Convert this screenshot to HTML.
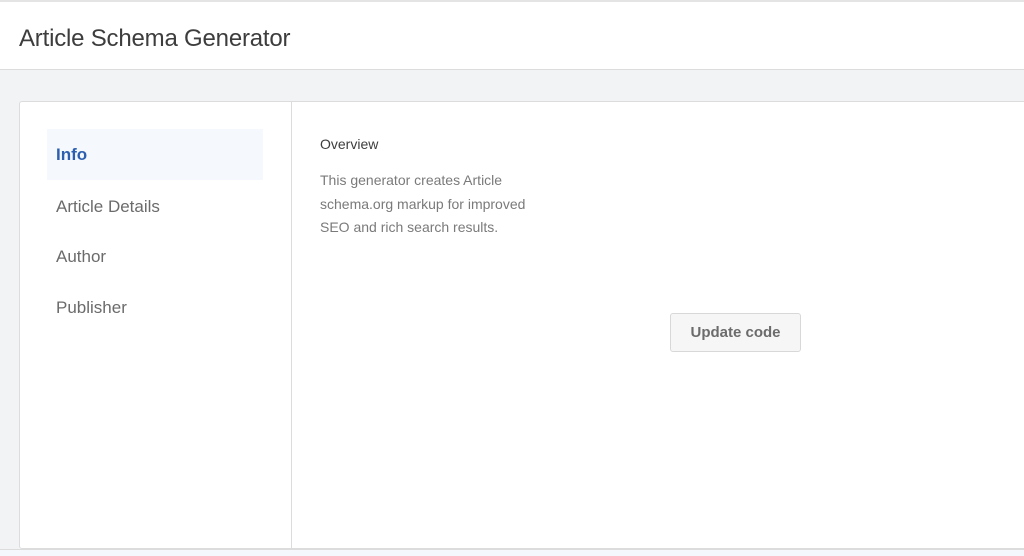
<!DOCTYPE html>
<html><head><style>
body{margin:0;width:1024px;height:555px;overflow:hidden;background:#f2f3f5;font-family:"Liberation Sans",sans-serif;position:relative}
.hdr{position:absolute;left:0;top:0;width:1024px;height:70px;background:#fff;border-top:2px solid #e4e4e4;border-bottom:1px solid #dcdcdc;box-sizing:border-box}
.hdr h1{margin:0;position:absolute;left:19px;top:23px;font-size:24px;font-weight:normal;color:#3d3d3d;letter-spacing:-0.2px}
.card{position:absolute;left:19px;top:101px;width:1020px;height:448px;background:#fff;border:1px solid #dcdcdc;border-radius:3px;box-sizing:border-box}
.side{position:absolute;left:0;top:0;width:271px;height:100%;border-right:1px solid #dcdcdc}
.item{position:absolute;left:27px;width:216px;height:51px;line-height:51px;padding-left:9px;box-sizing:border-box;font-size:17px;color:#6b6b6b}
.item.on{background:#f5f8fd;color:#2d5fb0;font-weight:bold}
.ov{position:absolute;left:300px;top:34px;font-size:14px;color:#3d3d3d}
.p{position:absolute;left:300px;top:67px;width:232px;font-size:14px;line-height:23.5px;color:#7a7a7a}
.btn{position:absolute;left:650px;top:211px;width:131px;height:39px;box-sizing:border-box;border:1px solid #d8d8d8;border-radius:3px;background:#f6f6f6;color:#6b6b6b;font-weight:bold;font-size:15px;text-align:center;line-height:37px}
.bot{position:absolute;left:0;top:549px;width:1024px;height:6px;background:#f4f7fb;border-top:1px solid #dcdcdc}
</style></head><body>
<div class="hdr"><h1>Article Schema Generator</h1></div>
<div class="card">
<div class="side">
<div class="item on" style="top:27px">Info</div>
<div class="item" style="top:79px">Article Details</div>
<div class="item" style="top:129px">Author</div>
<div class="item" style="top:180px">Publisher</div>
</div>
<div class="ov">Overview</div>
<div class="p">This generator creates Article schema.org markup for improved SEO and rich search results.</div>
<div class="btn">Update code</div>
</div>
<div class="bot"></div>
</body></html>
